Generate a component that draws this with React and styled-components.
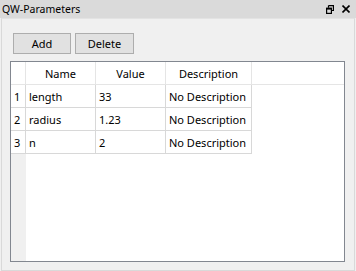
import React from "react";
import styled, { createGlobalStyle } from "styled-components";

const params = [
    { name: "length", value: "33", description: "No Description" },
    { name: "radius", value: "1.23", description: "No Description" },
    { name: "n", value: "2", description: "No Description" },
];

const columns = [
    { key: "name", label: "Name", width: 70 },
    { key: "value", label: "Value", width: 70 },
    { key: "description", label: "Description", width: 86 },
];

const App = () => {
    return (
        <>
            <GlobalStyle />
            <Dock>
                <TitleBar>
                    <span>QW-Parameters</span>
                    <TitleButtons>
                        <svg width="8" height="9" viewBox="0 0 8 9">
                            <path d="M2.5 0.6h4.9v4.9h-2M2.5 0.6v2.2" fill="none" stroke="#000" strokeWidth="1.2" />
                            <rect x="0.6" y="3.2" width="4.8" height="5.2" fill="none" stroke="#000" strokeWidth="1.2" />
                            <path d="M0.6 3.8h4.8" stroke="#000" strokeWidth="1.6" />
                        </svg>
                        <svg width="8" height="8" viewBox="0 0 8 8">
                            <path d="M0.5 0.5l7 7M7.5 0.5l-7 7" stroke="#000" strokeWidth="1.6" />
                        </svg>
                    </TitleButtons>
                </TitleBar>
                <Content>
                    <Toolbar>
                        <Button $width={58}>Add</Button>
                        <Button $width={59}>Delete</Button>
                    </Toolbar>
                    <Table>
                        <HeaderRow>
                            <Corner />
                            {columns.map(col => (
                                <HeaderCell key={col.key} $width={col.width}>
                                    {col.label}
                                </HeaderCell>
                            ))}
                        </HeaderRow>
                        {params.map((p, i) => (
                            <Row key={p.name}>
                                <RowNumber>{i + 1}</RowNumber>
                                {columns.map(col => (
                                    <Cell key={col.key} $width={col.width}>
                                        {p[col.key]}
                                    </Cell>
                                ))}
                            </Row>
                        ))}
                        <Filler>
                            <FillerStrip />
                        </Filler>
                    </Table>
                </Content>
            </Dock>
        </>
    );
};

export default App;

const GlobalStyle = createGlobalStyle`
    body {
        margin: 0;
        background: #f0f0f0;
        font-family: "Segoe UI", "Noto Sans", "Open Sans", sans-serif;
        font-size: 11px;
        color: #000;
    }
`;

const Dock = styled.div`
    width: 356px;
    height: 271px;
    display: flex;
    flex-direction: column;
    background: #f0f0f0;
`;

const TitleBar = styled.div`
    height: 18px;
    flex: none;
    background: #dadada;
    display: flex;
    align-items: center;
    justify-content: space-between;
    padding: 0 6px 0 2px;
    line-height: 18px;
    font-size: 10.5px;
    color: #000;
`;

const TitleButtons = styled.div`
    display: flex;
    align-items: center;
    gap: 8px;
    svg {
        display: block;
    }
`;

const Content = styled.div`
    flex: 1;
    margin: 0 1px 0 1px;
    border: 1px solid #d9d9d9;
    border-top: 1px solid #e3e3e3;
    padding: 14px 9px 8px 8px;
    display: flex;
    flex-direction: column;
    gap: 7px;
`;

const Toolbar = styled.div`
    display: flex;
    gap: 4px;
    padding-left: 3px;
`;

const Button = styled.button`
    width: ${({ $width }) => $width}px;
    height: 21px;
    padding: 0;
    border: 1px solid #adadad;
    background: #e1e1e1;
    font-family: inherit;
    font-size: 11px;
    color: #000;
`;

const Table = styled.div`
    flex: 1;
    border: 1px solid #828790;
    background: #fff;
    display: flex;
    flex-direction: column;
`;

const HeaderRow = styled.div`
    display: flex;
    height: 22px;
    flex: none;
    background: #fff;
    border-bottom: 1px solid #e5e5e5;
`;

const Corner = styled.div`
    width: 14px;
    border-right: 1px solid #e5e5e5;
`;

const HeaderCell = styled.div`
    width: ${({ $width }) => $width - 1}px;
    border-right: 1px solid #e5e5e5;
    display: flex;
    align-items: center;
    justify-content: center;
`;

const Row = styled.div`
    display: flex;
    height: 23px;
    flex: none;
`;

const RowNumber = styled.div`
    width: 11px;
    padding-left: 3px;
    border-right: 1px solid #d8d8d8;
    border-bottom: 1px solid #d8d8d8;
    display: flex;
    align-items: center;
`;

const Cell = styled.div`
    width: ${({ $width }) => $width - 4}px;
    padding-left: 3px;
    border-right: 1px solid #d8d8d8;
    border-bottom: 1px solid #d8d8d8;
    display: flex;
    align-items: center;
    white-space: nowrap;
`;

const Filler = styled.div`
    flex: 1;
    display: flex;
`;

const FillerStrip = styled.div`
    width: 15px;
    background: #f0f0f0;
`;
